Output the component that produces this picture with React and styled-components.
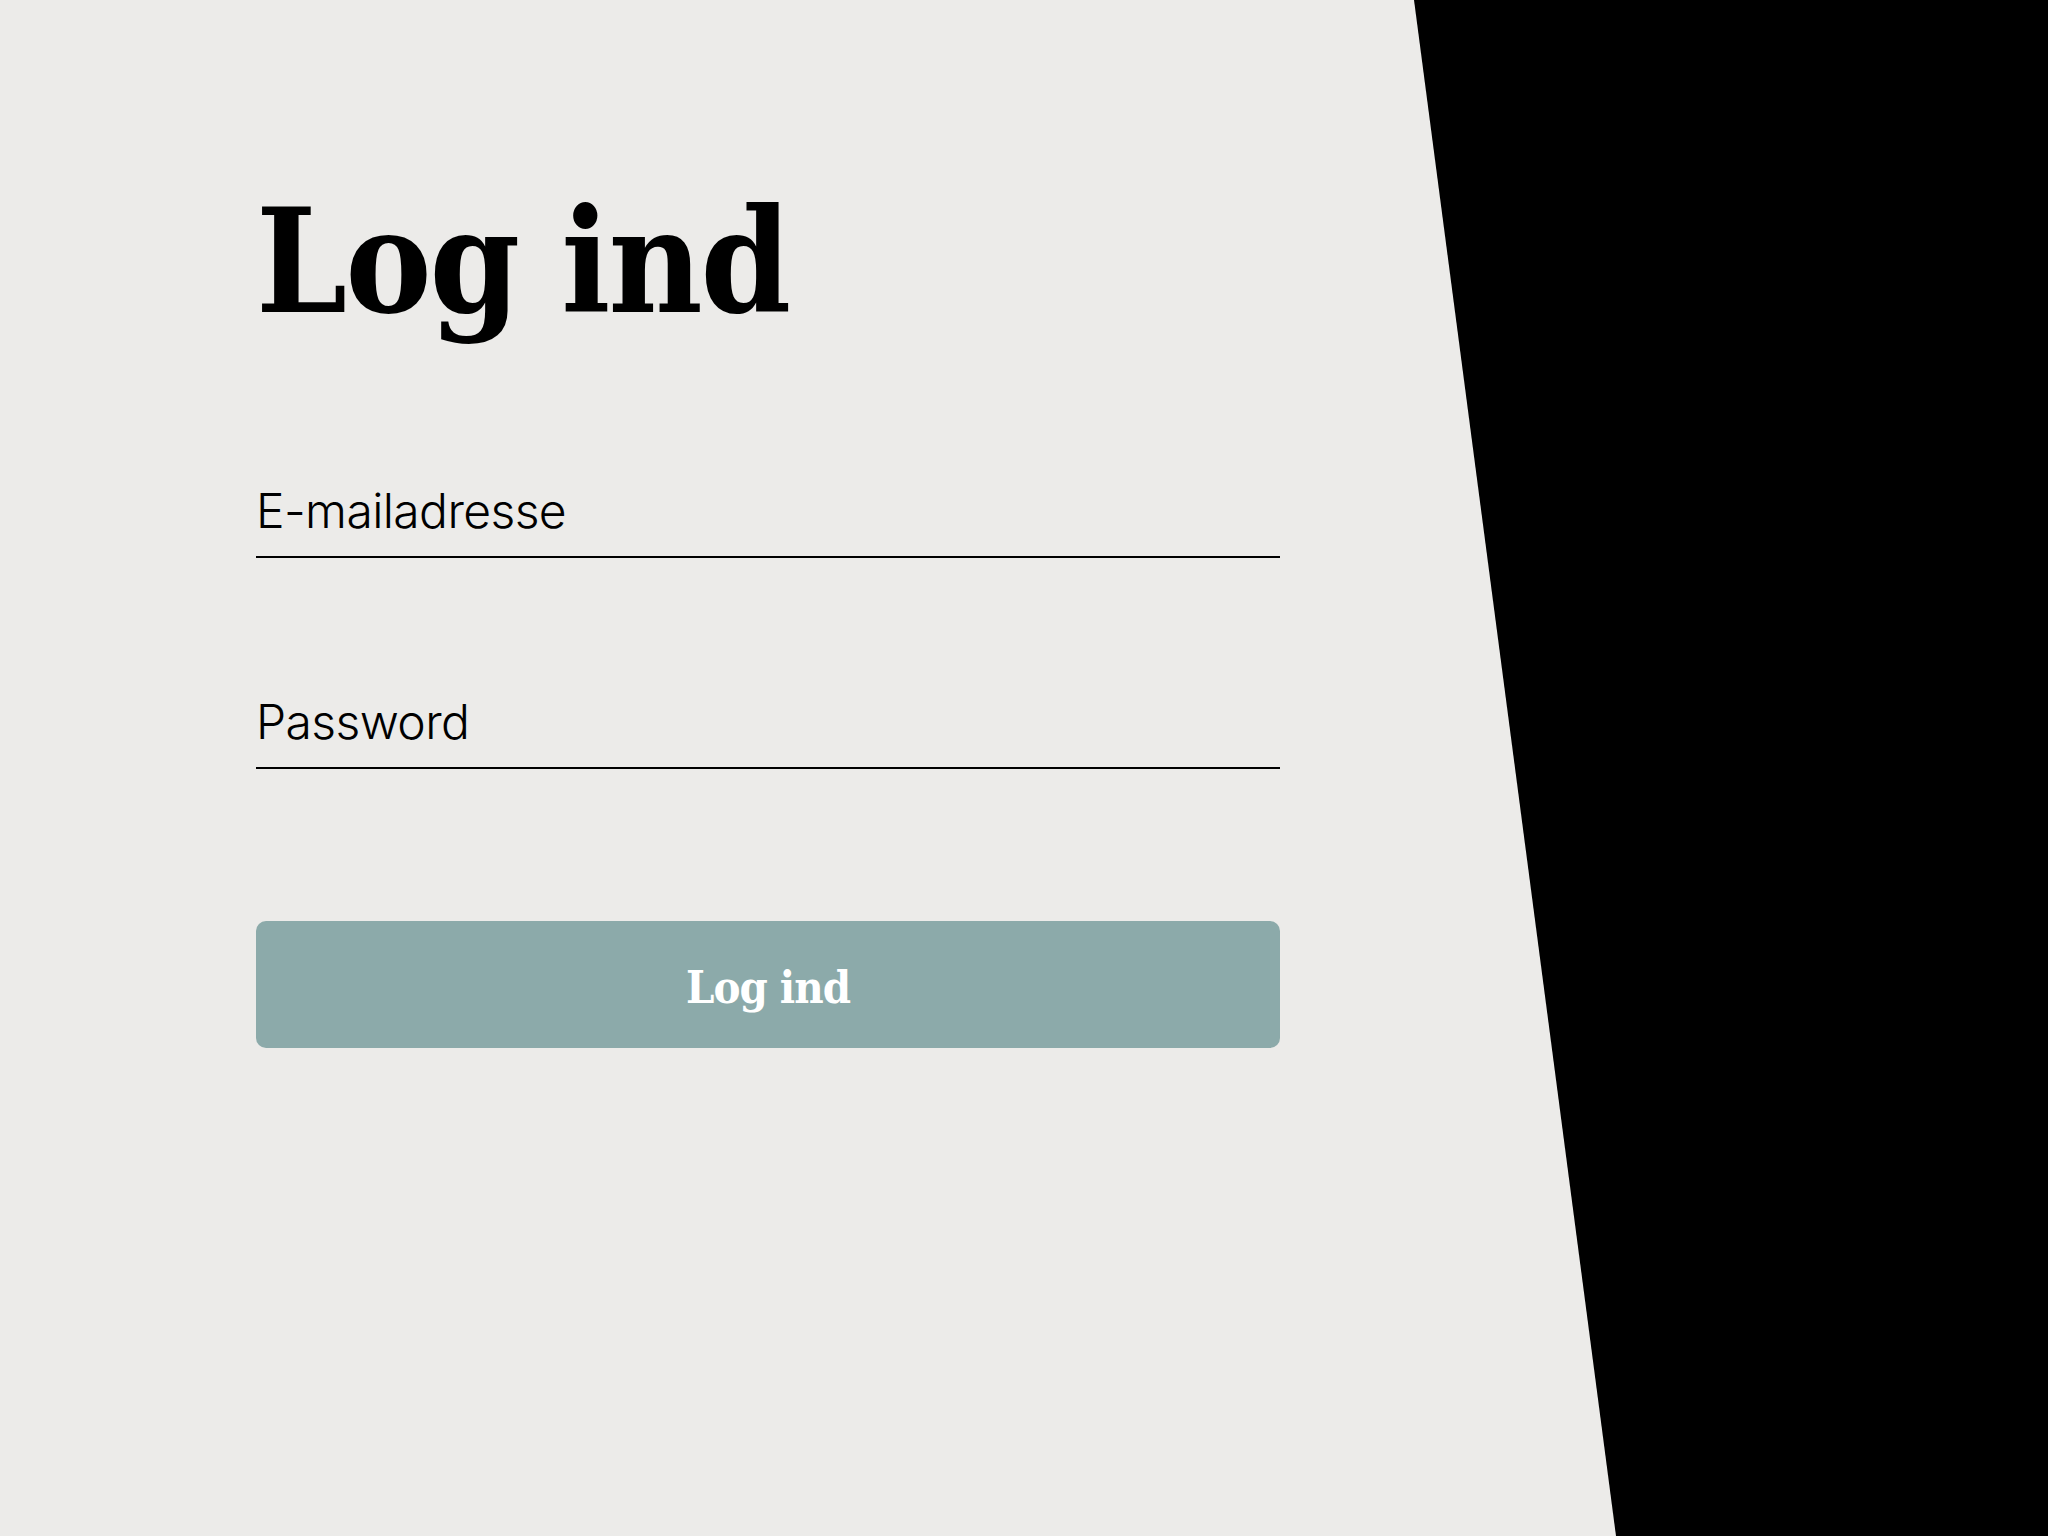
import React from "react"
import styled, { createGlobalStyle } from "styled-components"

const GlobalStyle = createGlobalStyle`
  html, body {
    margin: 0;
    padding: 0;
    background: #ecebe9;
  }
  * {
    box-sizing: border-box;
  }
`

const Page = styled.div`
  display: flex;
  width: 100%;
  height: 100vh;
  overflow: hidden;
  background: #ecebe9;
`

const Main = styled.main`
  flex: 1;
  padding: 190px 0 0 256px;
`

const Panel = styled.aside`
  flex: 0 0 634px;
  background: #000;
  clip-path: polygon(0 0, 100% 0, 100% 100%, 202px 100%);
`

const Form = styled.form`
  display: flex;
  flex-direction: column;
  width: 1024px;
`

const Title = styled.h1`
  margin: 0 0 147px;
  font-family: "DejaVu Serif Condensed", "DejaVu Serif", serif;
  font-weight: 700;
  font-size: 144px;
  line-height: 1;
  letter-spacing: -2px;
  color: #000;
`

const Input = styled.input`
  display: block;
  width: 100%;
  margin: 0 0 ${(p) => p.$gap || 0}px;
  padding: 0 0 17px;
  border: none;
  border-bottom: 2px solid #000;
  border-radius: 0;
  background: transparent;
  font-family: Inter, "Noto Sans", sans-serif;
  font-weight: 300;
  font-size: 48px;
  line-height: 58px;
  height: 77px;
  letter-spacing: -0.6px;
  color: #000;
  outline: none;

  &::placeholder {
    color: #000;
    opacity: 1;
  }
`

const Submit = styled.button`
  display: flex;
  align-items: center;
  justify-content: center;
  width: 100%;
  height: 127px;
  margin-top: 152px;
  padding: 6px 0 0;
  border: none;
  border-radius: 10px;
  background: #8caaaa;
  color: #fff;
  font-family: "DejaVu Serif Condensed", "DejaVu Serif", serif;
  font-weight: 700;
  font-size: 45px;
  line-height: 1;
  letter-spacing: -1px;
  cursor: pointer;
`

export default function App() {
  return (
    <>
      <GlobalStyle />
      <Page>
        <Main>
          <Form onSubmit={(e) => e.preventDefault()}>
            <Title>Log ind</Title>
            <Input type="email" placeholder="E-mailadresse" $gap={134} />
            <Input type="password" placeholder="Password" />
            <Submit type="submit">Log ind</Submit>
          </Form>
        </Main>
        <Panel />
      </Page>
    </>
  )
}
